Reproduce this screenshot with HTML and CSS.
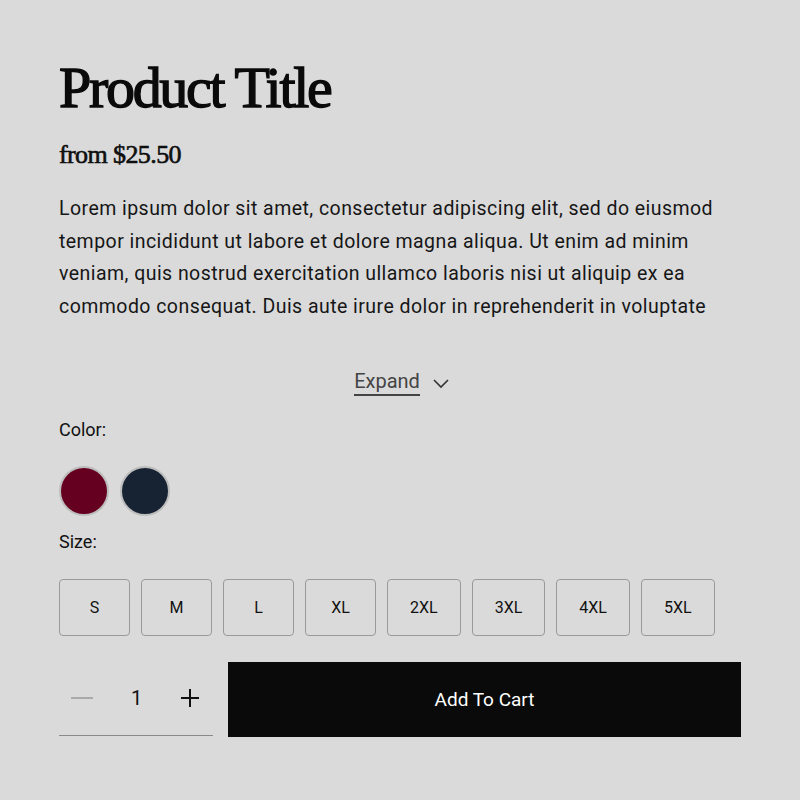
FILE: index.html
```html
<!DOCTYPE html>
<html>
<head>
<meta charset="utf-8">
<link rel="stylesheet" href="styles.css">
</head>
<body>
<main class="product">
  <h1 class="title">Product Title</h1>
  <div class="price">from $25.50</div>
  <p class="desc">Lorem ipsum dolor sit amet, consectetur adipiscing elit, sed do eiusmod tempor incididunt ut labore et dolore magna aliqua. Ut enim ad minim veniam, quis nostrud exercitation ullamco laboris nisi ut aliquip ex ea commodo consequat. Duis aute irure dolor in reprehenderit in voluptate</p>
  <div class="expand-row">
    <span class="expand">Expand</span>
    <svg class="chev" width="18" height="12" viewBox="0 0 18 12"><path d="M2 3 L9 10 L16 3" fill="none" stroke="#333" stroke-width="1.6"/></svg>
  </div>
  <div class="label">Color:</div>
  <div class="swatches">
    <span class="swatch wine"></span>
    <span class="swatch navy"></span>
  </div>
  <div class="label">Size:</div>
  <div class="sizes">
    <button class="size">S</button>
    <button class="size">M</button>
    <button class="size">L</button>
    <button class="size">XL</button>
    <button class="size">2XL</button>
    <button class="size">3XL</button>
    <button class="size">4XL</button>
    <button class="size">5XL</button>
  </div>
  <div class="buy">
    <div class="qty">
      <span class="minus"></span>
      <span class="num">1</span>
      <svg class="plus" width="20" height="20" viewBox="0 0 20 20"><path d="M10 1 V19 M1 10 H19" stroke="#111" stroke-width="2"/></svg>
    </div>
    <button class="cart">Add To Cart</button>
  </div>
</main>
</body>
</html>
```
FILE: styles.css
```css
html, body { margin: 0; padding: 0; }
body { background: #dadada; font-family: Roboto, "Liberation Sans", sans-serif; color: #111; }
.product { padding: 55px 59px 0 59px; display: flex; flex-direction: column; }
.title { font-family: "Liberation Serif", serif; font-weight: 400; font-size: 58px; letter-spacing: -2.3px; line-height: 65px; margin: 0; color: #0a0a0a; -webkit-text-stroke: 1.4px #0a0a0a; }
.price { font-family: "Liberation Serif", serif; font-weight: 400; font-size: 26px; letter-spacing: -0.6px; margin-top: 20px; line-height: 30px; -webkit-text-stroke: 0.6px #0a0a0a; }
.desc { font-size: 19.5px; letter-spacing: 0.45px; line-height: 32.7px; margin: 23px 0 0 0; color: #161616; }
.expand-row { display: flex; justify-content: center; align-items: center; gap: 12px; margin-top: 45px; padding-left: 4px; }
.expand { font-size: 20px; color: #444; border-bottom: 2px solid #444; line-height: 24px; padding-bottom: 1px; }
.chev { margin-top: 2px; }
.label { font-size: 18px; line-height: 24px; color: #111; margin-top: 22px; }
.swatches { display: flex; gap: 11px; margin-top: 24px; }
.swatch { width: 46px; height: 46px; border-radius: 50%; border: 2px solid #bdbdbd; display: block; }
.wine { background: #650020; }
.navy { background: #172333; }
.swatches + .label { margin-top: 14px; }
.sizes { display: flex; gap: 11px; margin-top: 25px; }
.size { min-width: 71px; height: 57px; padding: 0 22px; border: 1px solid #9a9a9a; border-radius: 4px; background: transparent; font-family: Roboto, "Liberation Sans", sans-serif; font-size: 16px; color: #111; }
.buy { display: flex; gap: 15px; margin-top: 26px; }
.qty { width: 154px; height: 74px; border-bottom: 1px solid #8a8a8a; display: flex; align-items: center; justify-content: space-between; padding: 0 13px 0 12px; box-sizing: border-box; }
.minus { width: 22px; height: 2px; background: #aaa; }
.num { font-size: 20px; color: #111; }
.cart { flex: 1; height: 75px; background: #0a0a0a; color: #fff; border: none; font-family: Roboto, "Liberation Sans", sans-serif; font-size: 19px; }
```
